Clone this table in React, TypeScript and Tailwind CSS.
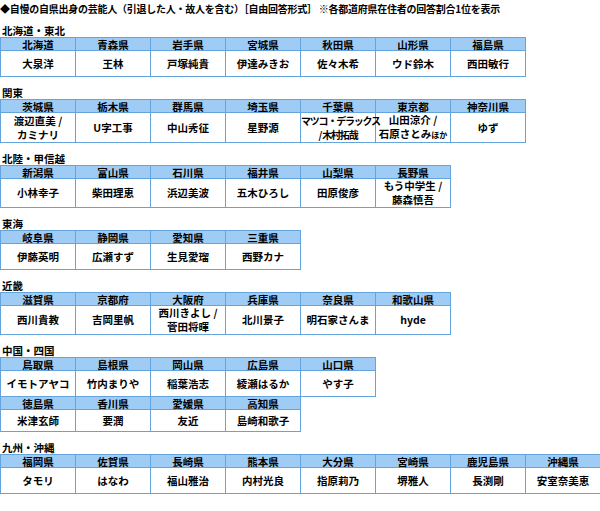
import React from "react";

type Cell = { pref: string; name: React.ReactNode };

interface Section {
  title: string;
  groups: Cell[][];
}

const sections: Section[] = [
  {
    title: "北海道・東北",
    groups: [
      [
        { pref: "北海道", name: "大泉洋" },
        { pref: "青森県", name: "王林" },
        { pref: "岩手県", name: "戸塚純貴" },
        { pref: "宮城県", name: "伊達みきお" },
        { pref: "秋田県", name: "佐々木希" },
        { pref: "山形県", name: "ウド鈴木" },
        { pref: "福島県", name: "西田敏行" },
      ],
    ],
  },
  {
    title: "関東",
    groups: [
      [
        { pref: "茨城県", name: <>渡辺直美 /<br />カミナリ</> },
        { pref: "栃木県", name: "U字工事" },
        { pref: "群馬県", name: "中山秀征" },
        { pref: "埼玉県", name: "星野源" },
        {
          pref: "千葉県",
          name: (
            <span className="text-[10px] tracking-[-1.2px]">
              マツコ・デラックス<br />/ 木村拓哉
            </span>
          ),
        },
        {
          pref: "東京都",
          name: (
            <>
              山田涼介 /<br />石原さとみ<span className="text-[8px]">ほか</span>
            </>
          ),
        },
        { pref: "神奈川県", name: "ゆず" },
      ],
    ],
  },
  {
    title: "北陸・甲信越",
    groups: [
      [
        { pref: "新潟県", name: "小林幸子" },
        { pref: "富山県", name: "柴田理恵" },
        { pref: "石川県", name: "浜辺美波" },
        { pref: "福井県", name: "五木ひろし" },
        { pref: "山梨県", name: "田原俊彦" },
        { pref: "長野県", name: <>もう中学生 /<br />藤森慎吾</> },
      ],
    ],
  },
  {
    title: "東海",
    groups: [
      [
        { pref: "岐阜県", name: "伊藤英明" },
        { pref: "静岡県", name: "広瀬すず" },
        { pref: "愛知県", name: "生見愛瑠" },
        { pref: "三重県", name: "西野カナ" },
      ],
    ],
  },
  {
    title: "近畿",
    groups: [
      [
        { pref: "滋賀県", name: "西川貴教" },
        { pref: "京都府", name: "吉岡里帆" },
        { pref: "大阪府", name: <>西川きよし /<br />菅田将暉</> },
        { pref: "兵庫県", name: "北川景子" },
        { pref: "奈良県", name: "明石家さんま" },
        { pref: "和歌山県", name: "hyde" },
      ],
    ],
  },
  {
    title: "中国・四国",
    groups: [
      [
        { pref: "鳥取県", name: "イモトアヤコ" },
        { pref: "島根県", name: "竹内まりや" },
        { pref: "岡山県", name: "稲葉浩志" },
        { pref: "広島県", name: "綾瀬はるか" },
        { pref: "山口県", name: "やす子" },
      ],
      [
        { pref: "徳島県", name: "米津玄師" },
        { pref: "香川県", name: "要潤" },
        { pref: "愛媛県", name: "友近" },
        { pref: "高知県", name: "島崎和歌子" },
      ],
    ],
  },
  {
    title: "九州・沖縄",
    groups: [
      [
        { pref: "福岡県", name: "タモリ" },
        { pref: "佐賀県", name: "はなわ" },
        { pref: "長崎県", name: "福山雅治" },
        { pref: "熊本県", name: "内村光良" },
        { pref: "大分県", name: "指原莉乃" },
        { pref: "宮崎県", name: "堺雅人" },
        { pref: "鹿児島県", name: "長渕剛" },
        { pref: "沖縄県", name: "安室奈美恵" },
      ],
    ],
  },
];

const RegionTable: React.FC<{ section: Section }> = ({ section }) => {
  const cols = Math.max(...section.groups.map((g) => g.length));
  return (
    <div className="mt-[10px]">
      <div className="text-[10.5px] leading-[11px] h-[12px] pl-[2px]">{section.title}</div>
      <table
        className="border-collapse table-fixed"
        style={{ width: cols * 75 }}
      >
        <tbody>
          {section.groups.map((group, gi) => (
            <React.Fragment key={gi}>
              <tr className="h-[13px] bg-[#9fccf4]">
                {group.map((c) => (
                  <td
                    key={c.pref}
                    className="w-[75px] border border-[#65a3dc] text-center text-[10.5px] leading-[11px] p-0"
                  >
                    {c.pref}
                  </td>
                ))}
              </tr>
              <tr className={gi === 0 ? "h-[26px]" : "h-[22px]"}>
                {group.map((c) => (
                  <td
                    key={c.pref}
                    className="w-[75px] border border-[#65a3dc] text-center text-[10.5px] leading-[14px] p-0 bg-white whitespace-nowrap"
                  >
                    {c.name}
                  </td>
                ))}
              </tr>
            </React.Fragment>
          ))}
        </tbody>
      </table>
    </div>
  );
};

export default function App() {
  return (
    <div
      className="w-[600px] h-[511px] bg-white text-black font-bold overflow-hidden"
      style={{ fontFamily: '"Noto Sans CJK JP", "Noto Sans", sans-serif' }}
    >
      <div className="pt-[3px] text-[10px] leading-[12px] h-[15px] whitespace-nowrap tracking-[-0.25px]">
        ◆自慢の自県出身の芸能人（引退した人・故人を含む）［自由回答形式］ ※各都道府県在住者の回答割合1位を表示
      </div>
      {sections.map((s) => (
        <RegionTable key={s.title} section={s} />
      ))}
    </div>
  );
}
